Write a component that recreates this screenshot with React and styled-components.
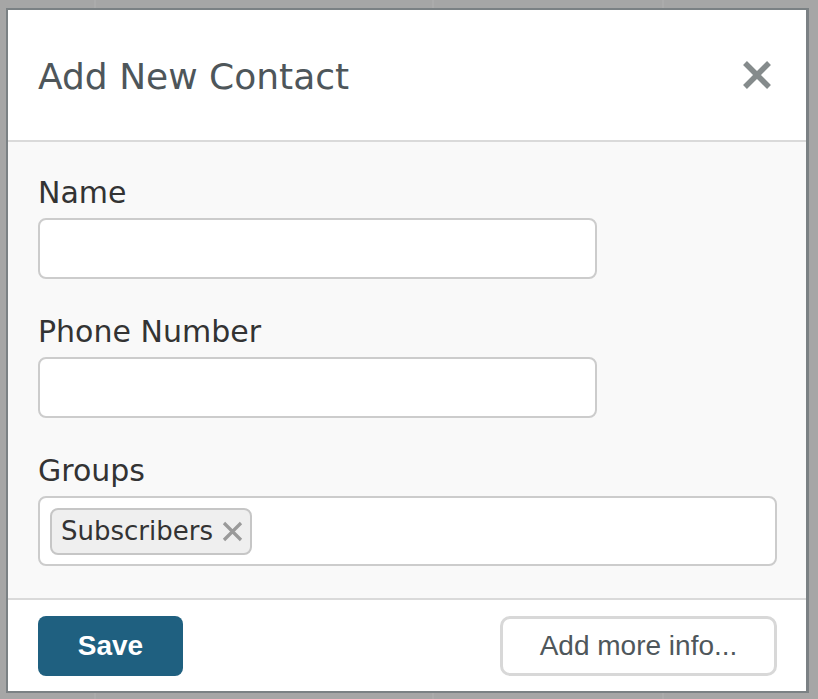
import React from 'react';
import styled, { createGlobalStyle } from 'styled-components';

const GlobalStyle = createGlobalStyle`
  html, body {
    margin: 0;
    padding: 0;
  }
  body {
    background-color: #a6a6a6;
    background-image:
      linear-gradient(to right, transparent 94px, #ababab 94px, #ababab 96px, transparent 96px),
      linear-gradient(to right, transparent 432px, #ababab 432px, #ababab 434px, transparent 434px),
      linear-gradient(to right, transparent 662px, #ababab 662px, #ababab 664px, transparent 664px);
    font-family: "DejaVu Sans", Verdana, sans-serif;
  }
`;

const Page = styled.div`
  padding: 8px 0 0 6px;
`;

const Modal = styled.div`
  width: 803px;
  box-sizing: border-box;
  border-style: solid;
  border-color: #7b8184;
  border-width: 2px 3px 2px 2px;
  background: #fff;
`;

const Header = styled.div`
  height: 132px;
  box-sizing: border-box;
  display: flex;
  align-items: center;
  justify-content: space-between;
  padding: 3px 34px 0 30px;
  border-bottom: 2px solid #dadada;
`;

const Title = styled.h2`
  margin: 0;
  font-size: 36px;
  font-weight: normal;
  line-height: 42px;
  color: #4e565a;
`;

const CloseButton = styled.button`
  border: none;
  background: none;
  padding: 0;
  margin-top: -3px;
  width: 30px;
  height: 30px;
  cursor: pointer;
  display: flex;
`;

const Body = styled.div`
  background: #f9f9f9;
  padding: 34px 29px 32px 30px;
  border-bottom: 2px solid #dadada;
`;

const Field = styled.div`
  & + & {
    margin-top: 36px;
  }
`;

const Label = styled.label`
  display: block;
  font-size: 30px;
  line-height: 34px;
  color: #333;
  margin-bottom: 8px;
`;

const TextInput = styled.input`
  display: block;
  box-sizing: border-box;
  width: 559px;
  height: 61px;
  border: 2px solid #cccccc;
  border-radius: 8px;
  background: #fff;
  font: inherit;
  font-size: 26px;
  padding: 0 12px;
  outline: none;
`;

const TagBox = styled.div`
  box-sizing: border-box;
  height: 70px;
  border: 2px solid #cccccc;
  border-radius: 8px;
  background: #fff;
  padding: 0 10px;
  display: flex;
  align-items: center;
  gap: 8px;
`;

const Chip = styled.span`
  box-sizing: border-box;
  height: 47px;
  display: inline-flex;
  align-items: center;
  gap: 9px;
  padding: 0 7px 0 9px;
  border: 2px solid #c6c6c6;
  border-radius: 8px;
  background: #efefef;
  font-size: 26px;
  color: #333;
`;

const ChipRemove = styled.button`
  border: none;
  background: none;
  padding: 0;
  width: 21px;
  height: 21px;
  display: flex;
  cursor: pointer;
`;

const Footer = styled.div`
  display: flex;
  justify-content: space-between;
  align-items: center;
  padding: 16px 29px 15px 30px;
`;

const Button = styled.button`
  box-sizing: border-box;
  height: 60px;
  font-family: "Liberation Sans", Arial, sans-serif;
  font-size: 28px;
  cursor: pointer;
  border-radius: ${({ primary }) => (primary ? '8px' : '10px')};
  width: ${({ primary }) => (primary ? '145px' : '277px')};
  font-weight: ${({ primary }) => (primary ? 'bold' : 'normal')};
  color: ${({ primary }) => (primary ? '#fff' : '#4f575b')};
  background: ${({ primary }) => (primary ? '#1f6080' : '#fff')};
  border: ${({ primary }) => (primary ? 'none' : '3px solid #d8d8d8')};
`;

const CloseIcon = () => (
  <svg width="30" height="30" viewBox="0 0 30 30">
    <path d="M3 3 L27 27 M27 3 L3 27" stroke="#858b8c" strokeWidth="5.5" />
  </svg>
);

const SmallX = () => (
  <svg width="21" height="21" viewBox="0 0 21 21">
    <path d="M2 2 L19 19 M19 2 L2 19" stroke="#9a9a9a" strokeWidth="3.2" />
  </svg>
);

const App = () => (
  <>
    <GlobalStyle />
    <Page>
      <Modal>
        <Header>
          <Title>Add New Contact</Title>
          <CloseButton aria-label="Close">
            <CloseIcon />
          </CloseButton>
        </Header>
        <Body>
          <Field>
            <Label>Name</Label>
            <TextInput type="text" />
          </Field>
          <Field>
            <Label>Phone Number</Label>
            <TextInput type="text" />
          </Field>
          <Field>
            <Label>Groups</Label>
            <TagBox>
              <Chip>
                Subscribers
                <ChipRemove aria-label="Remove">
                  <SmallX />
                </ChipRemove>
              </Chip>
            </TagBox>
          </Field>
        </Body>
        <Footer>
          <Button primary>Save</Button>
          <Button>Add more info...</Button>
        </Footer>
      </Modal>
    </Page>
  </>
);

export default App;
